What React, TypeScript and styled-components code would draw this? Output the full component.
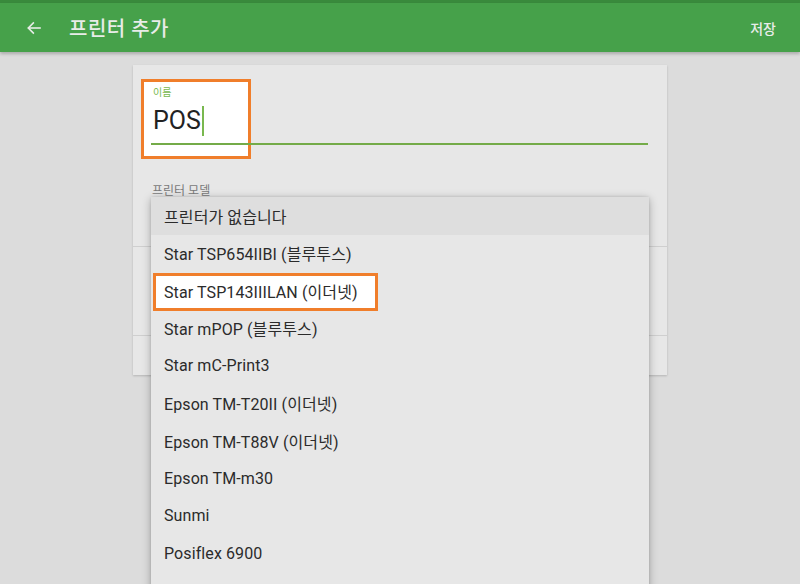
import React from 'react';
import styled, { createGlobalStyle } from 'styled-components';

const GlobalStyle = createGlobalStyle`
  html, body {
    margin: 0;
    padding: 0;
    background: #dcdcdc;
    font-family: Roboto, "Noto Sans CJK KR", sans-serif;
    overflow: hidden;
  }
`;

const Page = styled.div`
  width: 800px;
  height: 584px;
  display: flex;
  flex-direction: column;
  background: #dcdcdc;
  position: relative;
  overflow: hidden;
`;

const StatusStrip = styled.div`
  height: 3px;
  background: #398a3c;
`;

const AppBar = styled.header`
  height: 49px;
  background: #46a14a;
  display: flex;
  align-items: center;
  padding: 0 24px 0 26px;
  color: #e8ece8;
  box-shadow: 0 2px 3px rgba(0, 0, 0, 0.22);
  position: relative;
  z-index: 1;
`;

const BackButton = styled.span`
  display: flex;
  width: 18px;
  margin-right: 25px;
`;

const Title = styled.h1`
  margin: 0;
  flex: 1;
  font-size: 20px;
  font-weight: 500;
  letter-spacing: 0.5px;
`;

const SaveButton = styled.span`
  font-size: 14px;
  font-weight: 500;
`;

const Content = styled.main`
  display: flex;
  justify-content: center;
  padding-top: 13px;
`;

const Card = styled.section`
  width: 534px;
  height: 310px;
  background: #e7e7e7;
  box-shadow: 0 1px 2px rgba(0, 0, 0, 0.18);
  display: flex;
  flex-direction: column;
  position: relative;
`;

const NameField = styled.div`
  margin: 22px 19px 0 18px;
  padding-left: 2px;
  position: relative;
  display: flex;
  flex-direction: column;
  height: 58px;
`;

const Underline = styled.span`
  position: absolute;
  left: 0;
  right: 0;
  bottom: 0;
  height: 2px;
  background: #74ab48;
  z-index: 1;
`;

const FieldLabel = styled.label<{ $accent?: boolean }>`
  font-size: 10px;
  line-height: 12px;
  color: ${({ $accent }) => ($accent ? '#79b84f' : '#777')};
  position: relative;
  z-index: 1;
`;

const InputValue = styled.div`
  font-size: 25px;
  line-height: 30px;
  margin-top: 7px;
  color: #222;
  display: flex;
  align-items: center;
  position: relative;
  z-index: 1;
`;

const Caret = styled.span`
  display: inline-block;
  width: 2px;
  height: 30px;
  margin-left: 1px;
  background: #79b84f;
`;

const Highlight = styled.span<{ $top: number; $left: number; $width: number; $height: number }>`
  position: absolute;
  top: ${({ $top }) => $top}px;
  left: ${({ $left }) => $left}px;
  width: ${({ $width }) => $width}px;
  height: ${({ $height }) => $height}px;
  box-sizing: border-box;
  border: 3px solid #f07e2b;
  background: #ffffff;
`;

const ModelLabel = styled.div`
  margin: 36px 19px 0 19px;
  font-size: 12px;
  color: #7a7a7a;
`;

const Row = styled.div<{ $height: number }>`
  height: ${({ $height }) => $height}px;
  border-bottom: 1px solid #cfcfcf;
`;

const Menu = styled.ul`
  position: absolute;
  top: 197px;
  left: 151px;
  width: 498px;
  height: 400px;
  margin: 0;
  padding: 0;
  list-style: none;
  background: #e7e7e7;
  border-radius: 2px;
  box-shadow: 0 2px 10px rgba(0, 0, 0, 0.28), 0 0 3px rgba(0, 0, 0, 0.12);
  z-index: 2;
`;

const MenuItem = styled.li<{ $selected?: boolean }>`
  height: 37.5px;
  display: flex;
  align-items: center;
  padding-left: 13px;
  font-size: 16px;
  letter-spacing: 0.1px;
  color: #2b2b2b;
  position: relative;
  background: ${({ $selected }) => ($selected ? '#dedede' : 'transparent')};
`;

const ItemText = styled.span`
  position: relative;
  z-index: 1;
`;

const printers = [
  '프린터가 없습니다',
  'Star TSP654IIBI (블루투스)',
  'Star TSP143IIILAN (이더넷)',
  'Star mPOP (블루투스)',
  'Star mC-Print3',
  'Epson TM-T20II (이더넷)',
  'Epson TM-T88V (이더넷)',
  'Epson TM-m30',
  'Sunmi',
  'Posiflex 6900',
];

const ArrowBack = () => (
  <svg width="16" height="16" viewBox="0 0 24 24" fill="none" stroke="currentColor" strokeWidth="2.4" strokeLinecap="square">
    <path d="M21 12H4" />
    <path d="M11 4.5L3.5 12L11 19.5" />
  </svg>
);

export default function App() {
  return (
    <>
      <GlobalStyle />
      <Page>
        <StatusStrip />
        <AppBar>
          <BackButton>
            <ArrowBack />
          </BackButton>
          <Title>프린터 추가</Title>
          <SaveButton>저장</SaveButton>
        </AppBar>
        <Content>
          <Card>
            <NameField>
              <Highlight $top={-8} $left={-10} $width={110} $height={80} />
              <FieldLabel $accent>이름</FieldLabel>
              <InputValue>
                POS
                <Caret />
              </InputValue>
              <Underline />
            </NameField>
            <ModelLabel>프린터 모델</ModelLabel>
            <Row $height={48} />
            <Row $height={88} />
          </Card>
        </Content>
        <Menu>
          {printers.map((name, i) => (
            <MenuItem key={name} $selected={i === 0}>
              {i === 2 && <Highlight $top={1} $left={2} $width={225} $height={38} />}
              <ItemText>{name}</ItemText>
            </MenuItem>
          ))}
        </Menu>
      </Page>
    </>
  );
}
